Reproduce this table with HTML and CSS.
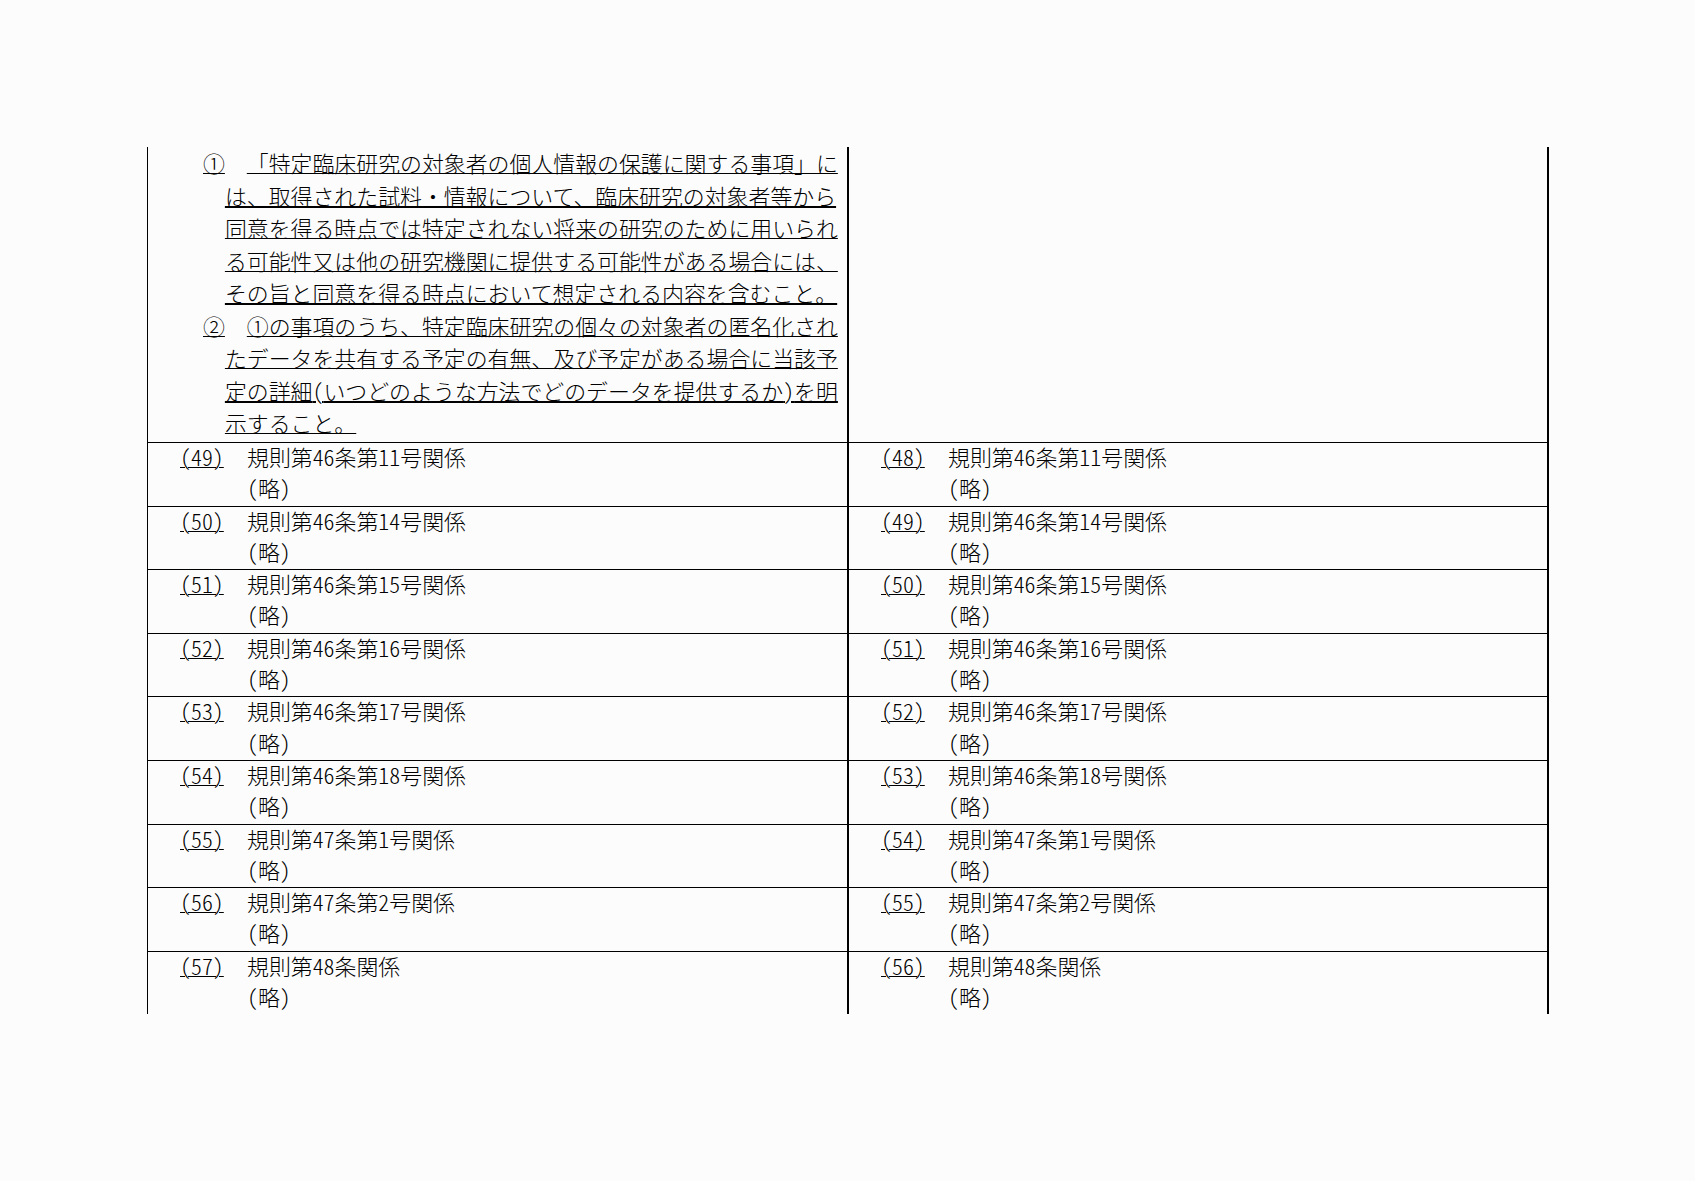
FILE: index.html
```html
<!DOCTYPE html>
<html lang="ja">
<head>
<meta charset="utf-8">
<title>新旧対照表</title>
<link rel="stylesheet" href="styles.css">
</head>
<body>
<main class="page">
  <div class="sheet">
    <div class="row row-top">
      <div class="cell cell-left">
        <div class="item">
          <span class="marker">①</span>
          <div class="body">
            <span class="line"><span class="gap">　</span><span class="u">「特定臨床研究の対象者の個人情報の保護に関する事項」に</span></span>
            <span class="line"><span class="u u2">は、取得された試料・情報について、臨床研究の対象者等から</span></span>
            <span class="line"><span class="u">同意を得る時点では特定されない将来の研究のために用いられ</span></span>
            <span class="line"><span class="u">る可能性又は他の研究機関に提供する可能性がある場合には、</span></span>
            <span class="line"><span class="u u2">その旨と同意を得る時点において想定される内容を含むこと。</span></span>
          </div>
        </div>
        <div class="item">
          <span class="marker">②</span>
          <div class="body">
            <span class="line"><span class="gap">　</span><span class="u">①の事項のうち、特定臨床研究の個々の対象者の匿名化され</span></span>
            <span class="line"><span class="u">たデータを共有する予定の有無、及び予定がある場合に当該予</span></span>
            <span class="line"><span class="u u2">定の詳細<span class="hw">(</span>いつどのような方法でどのデータを提供するか<span class="hw">)</span>を明</span></span>
            <span class="line"><span class="u">示すること。</span></span>
          </div>
        </div>
      </div>
      <div class="cell cell-right"></div>
    </div>

    <div class="row row-entry">
      <div class="cell cell-left"><div class="head"><span class="num"><span class="u">(49)</span></span><span>規則第46条第11号関係</span></div><div class="sub">(略)</div></div>
      <div class="cell cell-right"><div class="head"><span class="num"><span class="u">(48)</span></span><span>規則第46条第11号関係</span></div><div class="sub">(略)</div></div>
    </div>
    <div class="row row-entry">
      <div class="cell cell-left"><div class="head"><span class="num"><span class="u">(50)</span></span><span>規則第46条第14号関係</span></div><div class="sub">(略)</div></div>
      <div class="cell cell-right"><div class="head"><span class="num"><span class="u">(49)</span></span><span>規則第46条第14号関係</span></div><div class="sub">(略)</div></div>
    </div>
    <div class="row row-entry">
      <div class="cell cell-left"><div class="head"><span class="num"><span class="u">(51)</span></span><span>規則第46条第15号関係</span></div><div class="sub">(略)</div></div>
      <div class="cell cell-right"><div class="head"><span class="num"><span class="u">(50)</span></span><span>規則第46条第15号関係</span></div><div class="sub">(略)</div></div>
    </div>
    <div class="row row-entry">
      <div class="cell cell-left"><div class="head"><span class="num"><span class="u">(52)</span></span><span>規則第46条第16号関係</span></div><div class="sub">(略)</div></div>
      <div class="cell cell-right"><div class="head"><span class="num"><span class="u">(51)</span></span><span>規則第46条第16号関係</span></div><div class="sub">(略)</div></div>
    </div>
    <div class="row row-entry">
      <div class="cell cell-left"><div class="head"><span class="num"><span class="u">(53)</span></span><span>規則第46条第17号関係</span></div><div class="sub">(略)</div></div>
      <div class="cell cell-right"><div class="head"><span class="num"><span class="u">(52)</span></span><span>規則第46条第17号関係</span></div><div class="sub">(略)</div></div>
    </div>
    <div class="row row-entry">
      <div class="cell cell-left"><div class="head"><span class="num"><span class="u">(54)</span></span><span>規則第46条第18号関係</span></div><div class="sub">(略)</div></div>
      <div class="cell cell-right"><div class="head"><span class="num"><span class="u">(53)</span></span><span>規則第46条第18号関係</span></div><div class="sub">(略)</div></div>
    </div>
    <div class="row row-entry">
      <div class="cell cell-left"><div class="head"><span class="num"><span class="u">(55)</span></span><span>規則第47条第1号関係</span></div><div class="sub">(略)</div></div>
      <div class="cell cell-right"><div class="head"><span class="num"><span class="u">(54)</span></span><span>規則第47条第1号関係</span></div><div class="sub">(略)</div></div>
    </div>
    <div class="row row-entry">
      <div class="cell cell-left"><div class="head"><span class="num"><span class="u">(56)</span></span><span>規則第47条第2号関係</span></div><div class="sub">(略)</div></div>
      <div class="cell cell-right"><div class="head"><span class="num"><span class="u">(55)</span></span><span>規則第47条第2号関係</span></div><div class="sub">(略)</div></div>
    </div>
    <div class="row row-entry">
      <div class="cell cell-left"><div class="head"><span class="num"><span class="u">(57)</span></span><span>規則第48条関係</span></div><div class="sub">(略)</div></div>
      <div class="cell cell-right"><div class="head"><span class="num"><span class="u">(56)</span></span><span>規則第48条関係</span></div><div class="sub">(略)</div></div>
    </div>
  </div>
</main>
</body>
</html>
```

FILE: styles.css
```css
html, body {
  margin: 0;
  background: #fcfcfc;
}

body {
  font-family: "Noto Sans CJK JP", sans-serif;
  font-size: 21.9px;
  font-weight: 300;
  color: #000;
  text-spacing-trim: space-all;
}

.page {
  padding: 147px 0 0 147px;
}

.sheet {
  width: 1402px;
}

.row {
  display: grid;
  grid-template-columns: 702px 700px;
}

.cell {
  box-sizing: border-box;
}

.cell-left {
  border-left: 1px solid #000;
  border-right: 2px solid #000;
}

.cell-right {
  border-right: 2px solid #000;
}

/* top continuation cell */
.row-top .cell-left {
  padding: 0 0 2.5px 55px;
  line-height: 32.5px;
}

.item {
  display: flex;
}

.marker {
  flex: none;
  width: 1em;
  text-decoration: underline;
  text-decoration-thickness: 1px;
}

.line {
  display: block;
  white-space: nowrap;
}

.u {
  text-decoration: underline;
  text-decoration-thickness: 1px;
}

.u2 {
  text-decoration-thickness: 2px;
}

.hw {
  font-feature-settings: "hwid";
}

/* entry rows */
.row-entry .cell {
  height: 63.6px;
  border-top: 1px solid #000;
  padding-left: 32px;
  line-height: 31.3px;
  font-feature-settings: "hwid";
  white-space: nowrap;
}

.head {
  display: flex;
  margin-top: -2px;
}

.num {
  flex: none;
  width: 67px;
}

.sub {
  padding-left: 67px;
}
```
